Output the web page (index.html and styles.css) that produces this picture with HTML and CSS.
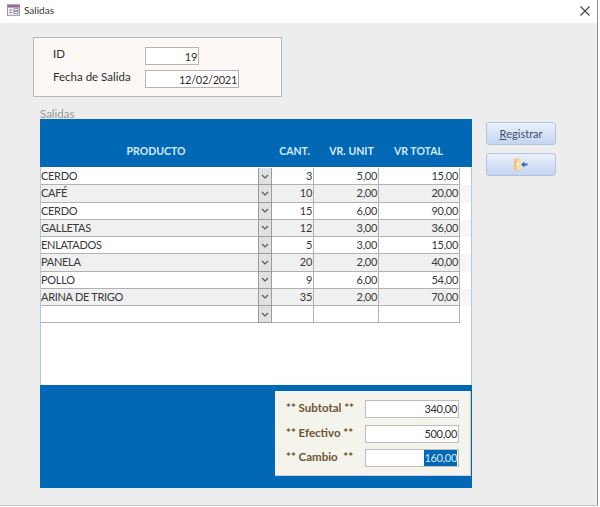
FILE: index.html
```html
<!DOCTYPE html>
<html lang="es">
<head>
<meta charset="utf-8">
<title>Salidas</title>
<link rel="stylesheet" href="styles.css">
</head>
<body>
<div class="window">
  <header class="titlebar">
    <svg class="form-icon" width="13" height="12" viewBox="0 0 16 14">
      <rect x="0.5" y="0.5" width="15" height="13" fill="#f3eef5" stroke="#8d7f9c"/>
      <rect x="1" y="1" width="14" height="3" fill="#9d5f86"/>
      <path d="M3 7h3M3 10h3" stroke="#5b6b8c" stroke-width="1.2"/>
      <rect x="8.5" y="5.5" width="5" height="2.5" fill="#fff" stroke="#5b6b8c" stroke-width="0.8"/>
      <rect x="8.5" y="9" width="5" height="2.5" fill="#fff" stroke="#5b6b8c" stroke-width="0.8"/>
    </svg>
    <span class="title">Salidas</span>
    <svg class="close" width="10" height="10" viewBox="0 0 10 10">
      <path d="M0.5 0.5l9 9M9.5 0.5l-9 9" stroke="#444" stroke-width="1.2"/>
    </svg>
  </header>
  <main class="content">
    <section class="card">
      <div class="card-row">
        <label class="card-label">ID</label>
        <div class="field id-field">19</div>
      </div>
      <div class="card-row">
        <label class="card-label">Fecha de Salida</label>
        <div class="field date-field">12/02/2021</div>
      </div>
    </section>
    <div class="sub-caption">Salidas</div>
    <div class="main-row">
      <section class="subform">
        <div class="grid-head">
          <div class="h-prod">PRODUCTO</div>
          <div class="h-cant">CANT.</div>
          <div class="h-unit">VR. UNIT</div>
          <div class="h-total">VR TOTAL</div>
        </div>
        <div class="rows">
          <div class="row"><div class="c-prod">CERDO</div><div class="c-btn"><svg width="8" height="5" viewBox="0 0 8 5"><path d="M1 1l3 3 3-3" fill="none" stroke="#555" stroke-width="1.1"/></svg></div><div class="c-num c-cant">3</div><div class="c-num c-unit">5,00</div><div class="c-num c-total">15,00</div></div>
          <div class="row alt"><div class="c-prod">CAFÉ</div><div class="c-btn"><svg width="8" height="5" viewBox="0 0 8 5"><path d="M1 1l3 3 3-3" fill="none" stroke="#555" stroke-width="1.1"/></svg></div><div class="c-num c-cant">10</div><div class="c-num c-unit">2,00</div><div class="c-num c-total">20,00</div></div>
          <div class="row"><div class="c-prod">CERDO</div><div class="c-btn"><svg width="8" height="5" viewBox="0 0 8 5"><path d="M1 1l3 3 3-3" fill="none" stroke="#555" stroke-width="1.1"/></svg></div><div class="c-num c-cant">15</div><div class="c-num c-unit">6,00</div><div class="c-num c-total">90,00</div></div>
          <div class="row alt"><div class="c-prod">GALLETAS</div><div class="c-btn"><svg width="8" height="5" viewBox="0 0 8 5"><path d="M1 1l3 3 3-3" fill="none" stroke="#555" stroke-width="1.1"/></svg></div><div class="c-num c-cant">12</div><div class="c-num c-unit">3,00</div><div class="c-num c-total">36,00</div></div>
          <div class="row"><div class="c-prod">ENLATADOS</div><div class="c-btn"><svg width="8" height="5" viewBox="0 0 8 5"><path d="M1 1l3 3 3-3" fill="none" stroke="#555" stroke-width="1.1"/></svg></div><div class="c-num c-cant">5</div><div class="c-num c-unit">3,00</div><div class="c-num c-total">15,00</div></div>
          <div class="row alt"><div class="c-prod">PANELA</div><div class="c-btn"><svg width="8" height="5" viewBox="0 0 8 5"><path d="M1 1l3 3 3-3" fill="none" stroke="#555" stroke-width="1.1"/></svg></div><div class="c-num c-cant">20</div><div class="c-num c-unit">2,00</div><div class="c-num c-total">40,00</div></div>
          <div class="row"><div class="c-prod">POLLO</div><div class="c-btn"><svg width="8" height="5" viewBox="0 0 8 5"><path d="M1 1l3 3 3-3" fill="none" stroke="#555" stroke-width="1.1"/></svg></div><div class="c-num c-cant">9</div><div class="c-num c-unit">6,00</div><div class="c-num c-total">54,00</div></div>
          <div class="row alt"><div class="c-prod">ARINA DE TRIGO</div><div class="c-btn"><svg width="8" height="5" viewBox="0 0 8 5"><path d="M1 1l3 3 3-3" fill="none" stroke="#555" stroke-width="1.1"/></svg></div><div class="c-num c-cant">35</div><div class="c-num c-unit">2,00</div><div class="c-num c-total">70,00</div></div>
          <div class="row"><div class="c-prod"></div><div class="c-btn"><svg width="8" height="5" viewBox="0 0 8 5"><path d="M1 1l3 3 3-3" fill="none" stroke="#555" stroke-width="1.1"/></svg></div><div class="c-num c-cant"></div><div class="c-num c-unit"></div><div class="c-num c-total"></div></div>
        </div>
        <footer class="grid-foot">
          <div class="totals">
            <div class="total-row"><span class="total-label">** Subtotal **</span><div class="total-field">340,00</div></div>
            <div class="total-row"><span class="total-label">** Efectivo **</span><div class="total-field">500,00</div></div>
            <div class="total-row"><span class="total-label">** Cambio&nbsp; **</span><div class="total-field"><span class="selected">160,00</span></div></div>
          </div>
        </footer>
      </section>
      <aside class="actions">
        <button class="btn" type="button"><u>R</u>egistrar</button>
        <button class="btn" type="button" aria-label="Salir">
          <svg width="14" height="13" viewBox="0 0 14 13">
            <rect x="0" y="0.5" width="7" height="12" rx="1" fill="#efc27e"/>
            <rect x="2.5" y="1" width="4.5" height="11" fill="#f7dba8"/>
            <rect x="3" y="5" width="1.5" height="2" fill="#fff"/>
            <path d="M7 6.5l3.5-3v2h3v2h-3v2z" fill="#3b6ea8"/>
          </svg>
        </button>
      </aside>
    </div>
  </main>
</div>
</body>
</html>
```
FILE: styles.css
```css
* { box-sizing: border-box; }
html, body { margin: 0; padding: 0; }
body { font-family: Lato, "Liberation Sans", sans-serif; font-size: 11px; color: #3f3f3f; background: #fff; }

.window {
  width: 598px;
  height: 506px;
  background: #ededed;
  border-right: 1px solid #8f8f8f;
  border-bottom: 1px solid #c4c4c4;
  overflow: hidden;
}

.titlebar {
  height: 23px;
  background: #fff;
  display: flex;
  align-items: center;
  padding: 0 7px 3px 7px;
}
.form-icon { margin-right: 4px; }
.title { font-size: 10px; color: #333; }
.close { margin-left: auto; margin-top: 2px; }

.content { padding: 14px 0 0 33px; }

.card {
  width: 249px;
  height: 60px;
  background: #fbf8f5;
  border: 1px solid #b9b9b9;
  padding: 9px 0 0 19px;
  display: flex;
  flex-direction: column;
  gap: 5px;
}
.card-row { display: flex; align-items: flex-start; height: 18px; }
.card-label { width: 92px; font-size: 11.5px; line-height: 14px; color: #2e2e2e; }
.field {
  height: 18px;
  background: #fff;
  border: 1px solid #b4b4b4;
  text-align: right;
  line-height: 17px;
  padding-right: 1px;
  font-size: 11px;
  letter-spacing: -0.3px;
  color: #2e2e2e;
}
.id-field { width: 54px; }
.date-field { width: 94px; }

.sub-caption { margin: 9px 0 0 7px; height: 13px; line-height: 15px; font-size: 11.5px; color: #969696; }

.main-row { display: flex; margin-left: 7px; align-items: flex-start; }

.subform {
  width: 432px;
  height: 369px;
  background: #fff;
  border: 1px solid #b5c9d8;
  border-top: 0;
  border-bottom: 0;
  display: flex;
  flex-direction: column;
}

.grid-head {
  height: 48px;
  background: #0068b5;
  color: #d4eafc;
  font-weight: 700;
  font-size: 10.5px;
  display: grid;
  grid-template-columns: 232px 41px 65px 81px;
  align-items: center;
  text-align: center;
  padding-top: 15px;
  margin: 0 -1px;
}
.h-cant { padding-left: 4px; }
.h-unit { padding-left: 12px; }
.h-total { padding-left: 0; }

.rows { display: flex; flex-direction: column; padding-top: 1px; }
.row {
  width: 100%;
  height: 17.25px;
  display: grid;
  grid-template-columns: 217px 14px 42px 65px 81px;
  line-height: 16px;
  font-size: 11px;
  letter-spacing: -0.3px;
  color: #383838;
  position: relative;
}
.row.alt { background: #f6f6f6; }
.c-prod { white-space: nowrap; overflow: hidden; border-bottom: 1px solid #b2b2b2; background: #fff; }
.row.alt .c-prod { background: #f0f0f0; }
.c-btn {
  background: #e1e1e1;
  border-left: 1px solid #9c9c9c;
  border-right: 1px solid #9c9c9c;
  border-bottom: 1px solid #9c9c9c;
  display: flex;
  align-items: center;
  justify-content: center;
}
.c-num { text-align: right; padding-right: 1px; border-right: 1px solid #b2b2b2; border-bottom: 1px solid #b2b2b2; background: #fff; }
.row.alt .c-num { background: #f0f0f0; }

.grid-foot {
  margin-top: auto;
  height: 103px;
  background: #0068b5;
  margin-left: -1px;
  margin-right: -1px;
  padding: 6px 1px 0 235px;
}
.totals {
  height: 85px;
  background: #f4f3ec;
  border-bottom: 1px solid #c8d5de;
  border-right: 1px solid #c9c9c9;
  padding: 9px 0 0 11px;
  display: flex;
  flex-direction: column;
  gap: 6.5px;
}
.total-row { display: flex; align-items: flex-start; height: 18px; }
.total-label { width: 79px; font-weight: 700; font-size: 11.5px; line-height: 15px; color: #6d5432; white-space: pre; }
.total-field {
  width: 94px;
  height: 18px;
  background: #fff;
  border: 1px solid #bdbdbd;
  text-align: right;
  padding-right: 1px;
  line-height: 16px;
  font-size: 11px;
  letter-spacing: -0.3px;
  color: #2e2e2e;
}
.selected { background: #0068b5; color: #d4eafc; display: inline-block; height: 16px; }

.actions { display: flex; flex-direction: column; gap: 8px; margin: 3px 0 0 14px; }
.btn {
  width: 70px;
  height: 23px;
  padding: 0;
  border: 1px solid #b3c3dc;
  border-radius: 3px;
  background: linear-gradient(#ecf1fb, #c4d4f2);
  color: #3f4f66;
  font: 11px Lato, "Liberation Sans", sans-serif;
  display: flex;
  align-items: center;
  justify-content: center;
}
```
